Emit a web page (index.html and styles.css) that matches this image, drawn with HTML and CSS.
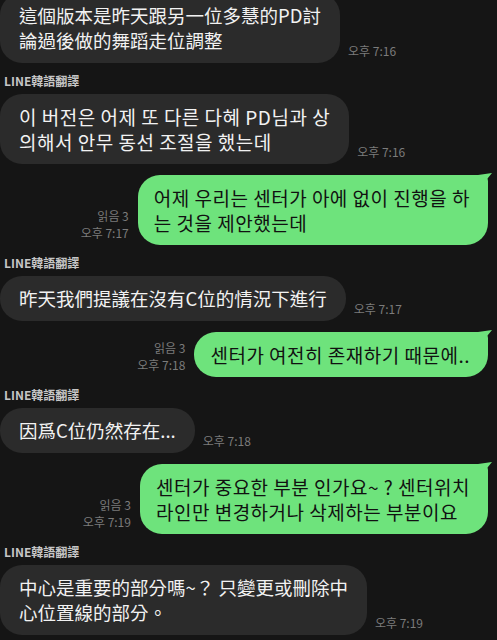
FILE: index.html
```html
<!DOCTYPE html>
<html lang="zh-Hant">
<head>
    <meta charset="UTF-8">
    <meta name="viewport" content="width=device-width, initial-scale=1.0">
    <title>LINE 聊天</title>
    <link rel="stylesheet" href="styles.css">
</head>
<body>
    <div class="chat">
        <div class="row in first">
            <div class="bubble zh">這個版本是昨天跟另一位多慧的PD討<br>論過後做的舞蹈走位調整</div>
            <span class="time">오후 7:16</span>
        </div>

        <div class="sender">LINE韓語翻譯</div>
        <div class="row in">
            <div class="bubble">이 버전은 어제 또 다른 다혜 PD님과 상<br>의해서 안무 동선 조절을 했는데</div>
            <span class="time">오후 7:16</span>
        </div>

        <div class="row out">
            <div class="meta"><span>읽음 3</span><span>오후 7:17</span></div>
            <div class="bubble green">어제 우리는 센터가 아에 없이 진행을 하<br>는 것을 제안했는데</div>
        </div>

        <div class="sender">LINE韓語翻譯</div>
        <div class="row in">
            <div class="bubble zh">昨天我們提議在沒有C位的情況下進行</div>
            <span class="time">오후 7:17</span>
        </div>

        <div class="row out">
            <div class="meta"><span>읽음 3</span><span>오후 7:18</span></div>
            <div class="bubble green">센터가 여전히 존재하기 때문에..</div>
        </div>

        <div class="sender">LINE韓語翻譯</div>
        <div class="row in">
            <div class="bubble zh">因爲C位仍然存在...</div>
            <span class="time">오후 7:18</span>
        </div>

        <div class="row out">
            <div class="meta"><span>읽음 3</span><span>오후 7:19</span></div>
            <div class="bubble green">센터가 중요한 부분 인가요~ ? 센터위치<br>라인만 변경하거나 삭제하는 부분이요</div>
        </div>

        <div class="sender">LINE韓語翻譯</div>
        <div class="row in">
            <div class="bubble zh">中心是重要的部分嗎~？ 只變更或刪除中<br>心位置線的部分。</div>
            <span class="time">오후 7:19</span>
        </div>
    </div>
</body>
</html>
```

FILE: styles.css
```css
body {
    margin: 0;
    background-color: #151515;
    font-family: "Noto Sans CJK KR", "Noto Sans CJK TC", sans-serif;
    overflow: hidden;
}
.chat {
    display: flex;
    flex-direction: column;
    padding-right: 9px;
}
.row {
    display: flex;
    align-items: flex-end;
}
.row.first {
    margin-top: -7px;
}
.row.in {
    gap: 8px;
}
.row.out {
    justify-content: flex-end;
    gap: 9px;
    margin-top: 11px;
}
.sender {
    margin: 10px 0 5px 4px;
    font-size: 12px;
    line-height: 16px;
    font-weight: bold;
    color: #c6c6c6;
    font-family: "Noto Sans CJK TC", sans-serif;
}
.bubble {
    position: relative;
    background-color: #2b2b2b;
    color: #f2f2f2;
    font-size: 19px;
    letter-spacing: 0.5px;
    line-height: 25px;
    padding: 10px 19px;
    border-radius: 22px;
    white-space: nowrap;
}
.bubble.zh {
    font-family: "Noto Sans CJK TC", sans-serif;
    font-size: 18.5px;
    letter-spacing: 0;
}
.bubble.green {
    background-color: #6ee37c;
    color: #111;
    padding: 10px 18px 10px 16px;
    border-top-right-radius: 6px;
}
.bubble.green::after {
    content: '';
    position: absolute;
    top: -2px;
    right: -4px;
    width: 14px;
    height: 16px;
    background-color: #6ee37c;
    clip-path: polygon(0 12%, 100% 0, 62% 40%, 55% 100%, 0 100%);
}
.time {
    font-size: 12px;
    line-height: 16px;
    color: #7b7b7b;
    padding-bottom: 4px;
    white-space: nowrap;
}
.meta {
    display: flex;
    flex-direction: column;
    align-items: flex-end;
    font-size: 12px;
    line-height: 17px;
    color: #7b7b7b;
    padding-bottom: 4px;
    white-space: nowrap;
}
```
